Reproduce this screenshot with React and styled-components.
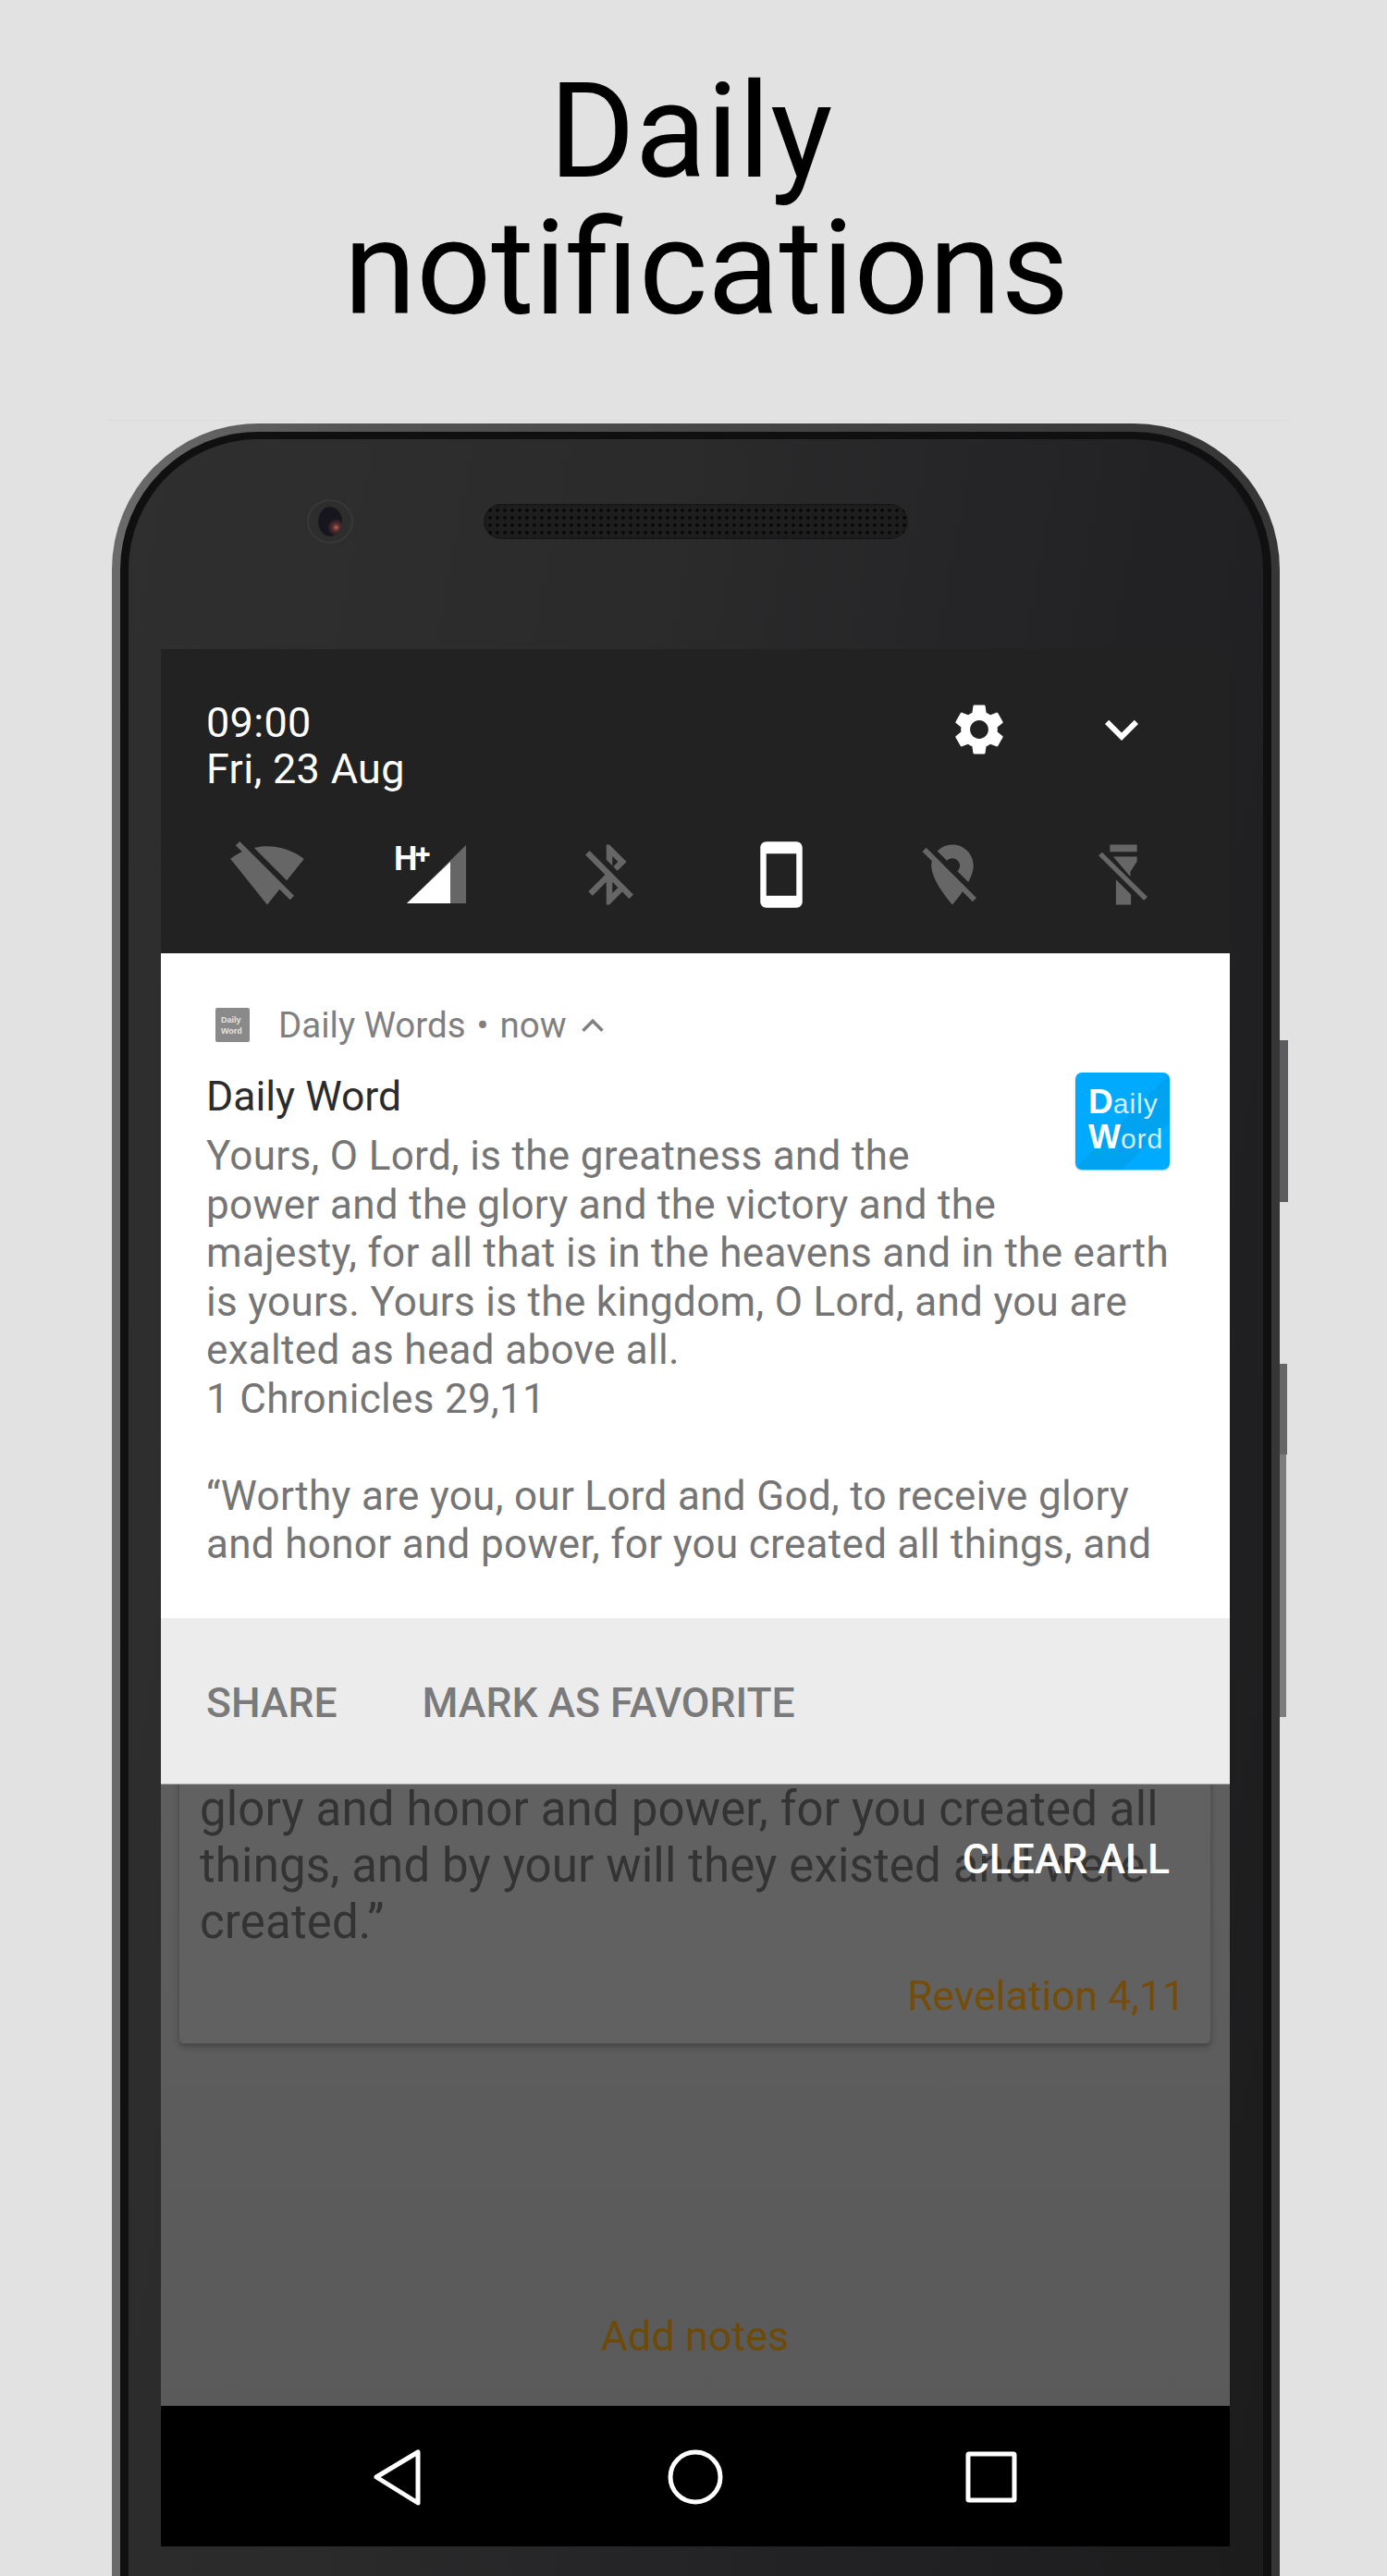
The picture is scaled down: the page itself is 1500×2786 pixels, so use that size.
import React from 'react';
import styled, { createGlobalStyle } from 'styled-components';

const GlobalStyle = createGlobalStyle`
  html, body {
    margin: 0;
    padding: 0;
    background: #e2e2e2;
  }
`;

const Page = styled.div`
  width: 1500px;
  height: 2786px;
  overflow: hidden;
  background: #e2e2e2;
  font-family: Roboto, "Liberation Sans", sans-serif;
`;

const Title = styled.h1`
  margin: 69px 0 89px;
  font-size: 142px;
  line-height: 148px;
  font-weight: 400;
  text-align: center;
  color: #000;
`;

const TitleLine = styled.div`
  padding-left: ${props => props.$left || 0}px;
  padding-right: ${props => props.$right || 0}px;
`;

const Rule = styled.div`
  width: 1280px;
  height: 1px;
  margin: 0 0 3px 115px;
  background: #dcdcdc;
`;

const Phone = styled.div`
  position: relative;
  width: 1263px;
  margin-left: 121px;
  padding: 9px 9px 0;
  box-sizing: border-box;
  border-radius: 158px 158px 0 0;
  background: linear-gradient(90deg, #6b6b6b 0, #555 20%, #464646 50%, #3a3a3a 85%, #363636 100%);
`;

const SideButton = styled.div`
  position: absolute;
  left: 100%;
  top: ${props => props.$top}px;
  width: ${props => props.$width}px;
  height: ${props => props.$height}px;
  background: ${props => props.$color};
`;

const Body = styled.div`
  padding: 227px 36px 60px 35px;
  border: solid #101010;
  border-width: 8px 9px 0;
  border-radius: 149px 149px 0 0;
  background: linear-gradient(100deg, #2f2f30 0, #2b2b2c 35%, #222224 70%, #1c1c1d 100%);
  position: relative;
`;

const Bezel = styled.div`
  position: absolute;
  top: 65px;
  left: 193px;
  display: flex;
  align-items: center;
  gap: 141px;
`;

const Camera = styled.div`
  width: 50px;
  height: 48px;
  border-radius: 50%;
  border: 2px solid #383839;
  box-sizing: border-box;
  display: flex;
  align-items: center;
  justify-content: center;
`;

const Lens = styled.div`
  width: 26px;
  height: 32px;
  border-radius: 50%;
  background: radial-gradient(circle at 75% 70%, #c8604f 0, #5a3034 12%, #17161f 32%);
`;

const Speaker = styled.div`
  width: 459px;
  height: 38px;
  border-radius: 19px;
  background-color: #1e1e1f;
  background-image: radial-gradient(circle, #0a0a0a 1.6px, transparent 2px);
  background-size: 8px 8px;
  background-position: 3px 3px;
  box-shadow: inset 0 0 3px #111;
`;

const Screen = styled.div`
  display: flex;
  flex-direction: column;
`;

const Stage = styled.div`
  display: grid;
  height: 1900px;
  overflow: hidden;
  background: linear-gradient(180deg, #626262 0, #5e5e5e 70%, #5a5a5a 100%);

  & > * {
    grid-area: 1 / 1;
  }
`;

const AppContent = styled.div`
  padding: 0 21px 0 20px;
`;

const Card = styled.div`
  height: 1508px;
  box-sizing: border-box;
  padding: 0 27px 25px 22px;
  display: flex;
  flex-direction: column;
  justify-content: flex-end;
  border-radius: 0 0 5px 5px;
  background: #616161;
  box-shadow: 0 3px 6px rgba(0, 0, 0, 0.3);
`;

const Verse = styled.div`
  font-size: 51px;
  line-height: 61px;
  letter-spacing: 0.15px;
  color: #333;
  white-space: nowrap;
`;

const Reference = styled.div`
  margin-top: 24px;
  font-size: 44.5px;
  line-height: 52px;
  text-align: right;
  color: #744d0a;
`;

const AddNotes = styled.div`
  margin-top: 291px;
  font-size: 45px;
  line-height: 52px;
  text-align: center;
  color: #6e4a08;
`;

const Shade = styled.div`
  align-self: start;
  display: flex;
  flex-direction: column;
`;

const Header = styled.div`
  height: 329px;
  box-sizing: border-box;
  padding-top: 51px;
  background: #222;
`;

const TopRow = styled.div`
  display: flex;
  align-items: flex-start;
  padding: 0 81px 0 49px;
`;

const Clock = styled.div`
  padding-top: 4px;
  font-size: 45px;
  line-height: 50px;
  letter-spacing: 0.3px;
  color: #fff;
`;

const Controls = styled.div`
  margin-left: auto;
  display: flex;
  align-items: center;
  gap: 85px;
`;

const Toggles = styled.div`
  display: grid;
  grid-template-columns: repeat(6, 1fr);
  align-items: center;
  justify-items: center;
  height: 80px;
  margin-top: 48px;
  padding: 0 22px;
`;

const SignalSvg = styled.svg`
  margin-right: 18px;
`;

const Notification = styled.div`
  height: 719px;
  box-sizing: border-box;
  padding-top: 59px;
  overflow: hidden;
  background: #fff;
`;

const AppRow = styled.div`
  display: flex;
  align-items: center;
  height: 37px;
  padding-left: 59px;
  font-size: 38.5px;
  color: #808080;
`;

const SmallBadge = styled.div`
  width: 37px;
  height: 37px;
  margin-right: 31px;
  padding: 7px 0 0 6px;
  box-sizing: border-box;
  border-radius: 2px;
  background: #8a8a8a;
  font-family: "Liberation Sans", sans-serif;
  font-size: 9px;
  line-height: 12px;
  font-weight: 700;
  color: #e4e4e4;
`;

const Dot = styled.span`
  margin: 0 12px;
`;

const AppChevron = styled.svg`
  margin-left: 14px;
`;

const Content = styled.div`
  display: grid;
  margin-top: 33px;

  & > * {
    grid-area: 1 / 1;
  }
`;

const TextBlock = styled.div`
  padding-left: 49px;
`;

const NotifTitle = styled.div`
  margin-bottom: 12px;
  font-size: 44.5px;
  line-height: 52px;
  color: #2b2b2b;
`;

const NotifLine = styled.div`
  min-height: 52.5px;
  font-size: 44px;
  line-height: 52.5px;
  letter-spacing: 0.32px;
  color: #757575;
  white-space: nowrap;
`;

const LargeIcon = styled.div`
  justify-self: end;
  align-self: start;
  width: 102px;
  height: 105px;
  margin: 0 65px 0 0;
  padding: 14px 0 0 14px;
  box-sizing: border-box;
  border-radius: 7px;
  background: linear-gradient(135deg, #00aaff 0, #00aaff 50%, #01a2f0 50%, #01a2f0 75%, #00aaff 75%);
  box-shadow: 0 1px 2px rgba(0, 0, 0, 0.25);
  font-family: "Liberation Sans", sans-serif;
  font-size: 30px;
  letter-spacing: 1px;
  line-height: 36px;
  color: #d4efff;
`;

const IconCap = styled.span`
  font-size: 37px;
  font-weight: 700;
  letter-spacing: 0;
  color: #fff;
`;

const ActionBar = styled.div`
  height: 179px;
  box-sizing: border-box;
  padding: 4px 0 0 49px;
  display: flex;
  align-items: center;
  gap: 92px;
  background: #ececec;
  box-shadow: 0 1px 0 #aaa;
  font-size: 44.5px;
  font-weight: 500;
  color: #7a7a7a;
`;

const ClearAll = styled.div`
  margin-top: 57px;
  padding-right: 65px;
  font-size: 44.5px;
  line-height: 50px;
  font-weight: 500;
  text-align: right;
  color: #fff;
`;

const NavBar = styled.div`
  height: 152px;
  display: flex;
  align-items: center;
  justify-content: center;
  gap: 258px;
  background: #000;
`;

const GRAY = '#666';

const Icon = ({ d, size = 78, color = GRAY }) => (
  <svg width={size} height={size} viewBox="0 0 24 24" fill={color}>
    <path d={d} />
  </svg>
);

const SignalIcon = () => (
  <SignalSvg width="80" height="80" viewBox="0 -8 80 80">
    <polygon points="79,0 79,63 15,63" fill={GRAY} />
    <polygon points="62,18 62,63 15,63" fill="#fff" />
    <text x="1" y="27" fontFamily="Roboto, sans-serif" fontSize="36" fontWeight="700" fill="#fff">H</text>
    <text x="24" y="20" fontFamily="Roboto, sans-serif" fontSize="30" fontWeight="700" fill="#fff">+</text>
  </SignalSvg>
);

const verseLines = [
  'Yours, O Lord, is the greatness and the',
  'power and the glory and the victory and the',
  'majesty, for all that is in the heavens and in the earth',
  'is yours. Yours is the kingdom, O Lord, and you are',
  'exalted as head above all.',
  '1 Chronicles 29,11',
  '',
  '“Worthy are you, our Lord and God, to receive glory',
  'and honor and power, for you created all things, and',
];

const cardLines = [
  'glory and honor and power, for you created all',
  'things, and by your will they existed and were',
  'created.”',
];

function App() {
  return (
    <Page>
      <GlobalStyle />
      <Title>
        <TitleLine $right={6}>Daily</TitleLine>
        <TitleLine $left={28}>notifications</TitleLine>
      </Title>
      <Rule />
      <Phone>
        <SideButton $top={667} $width={9} $height={175} $color="#5c5b5e" />
        <SideButton $top={1017} $width={8} $height={98} $color="#666" />
        <SideButton $top={1115} $width={7} $height={284} $color="#7d7d7d" />
        <Body>
          <Bezel>
            <Camera><Lens /></Camera>
            <Speaker />
          </Bezel>
          <Screen>
            <Stage>
              <AppContent>
                <Card>
                  {cardLines.map(line => <Verse key={line}>{line}</Verse>)}
                  <Reference>Revelation 4,11</Reference>
                </Card>
                <AddNotes>Add notes</AddNotes>
              </AppContent>
              <Shade>
                <Header>
                  <TopRow>
                    <Clock>09:00<br />Fri, 23 Aug</Clock>
                    <Controls>
                      <Icon size={66} color="#fff" d="M19.14 12.94c.04-.3.06-.61.06-.94 0-.32-.02-.64-.07-.94l2.03-1.58c.18-.14.23-.41.12-.61l-1.92-3.32c-.12-.22-.37-.29-.59-.22l-2.39.96c-.5-.38-1.03-.7-1.62-.94l-.36-2.54c-.04-.24-.24-.41-.48-.41h-3.84c-.24 0-.43.17-.47.41l-.36 2.54c-.59.24-1.13.57-1.62.94l-2.39-.96c-.22-.08-.47 0-.59.22L2.74 8.87c-.12.21-.08.47.12.61l2.03 1.58c-.05.3-.09.63-.09.94s.02.64.07.94l-2.03 1.58c-.18.14-.23.41-.12.61l1.92 3.32c.12.22.37.29.59.22l2.39-.96c.5.38 1.03.7 1.62.94l.36 2.54c.05.24.24.41.48.41h3.84c.24 0 .44-.17.47-.41l.36-2.54c.59-.24 1.13-.56 1.62-.94l2.39.96c.22.08.47 0 .59-.22l1.92-3.32c.12-.22.07-.47-.12-.61l-2.01-1.58zM12 15.6c-1.98 0-3.6-1.62-3.6-3.6s1.62-3.6 3.6-3.6 3.6 1.62 3.6 3.6-1.62 3.6-3.6 3.6z" />
                      <Icon size={72} color="#fff" d="M16.59 8.59L12 13.17 7.41 8.59 6 10l6 6 6-6z" />
                    </Controls>
                  </TopRow>
                  <Toggles>
                    <Icon size={82} d="M23.64 7c-.45-.34-4.93-4-11.64-4-1.5 0-2.89.19-4.15.48L18.18 13.8 23.64 7zm-6.6 8.22L3.27 1.44 2 2.72l2.05 2.06C1.91 5.76.59 6.82.36 7l11.63 14.49.01.01.01-.01 3.9-4.86 3.32 3.32 1.27-1.27-3.46-3.46z" />
                    <SignalIcon />
                    <Icon d="M13 5.83l1.88 1.88-1.6 1.6 1.41 1.41 3.02-3.02L12 2h-1v5.03l2 2v-3.2zM5.41 4L4 5.41 10.59 12 5 17.59 6.41 19 11 14.41V22h1l4.29-4.29 2.3 2.3L20 18.59 5.41 4zM13 18.17v-3.76l1.88 1.88L13 18.17z" />
                    <Icon color="#fff" d="M17 1.01L7 1c-1.1 0-1.99.9-1.99 2v18c0 1.1.89 2 1.99 2h10c1.1 0 2-.9 2-2V3c0-1.1-.9-1.99-2-1.99zM17 19H7V5h10v14z" />
                    <Icon d="M12 6.5c1.38 0 2.5 1.12 2.5 2.5 0 .74-.33 1.39-.83 1.85l3.63 3.63c.98-1.86 1.7-3.8 1.7-5.48 0-3.87-3.13-7-7-7-1.98 0-3.76.83-5.04 2.15l3.19 3.19c.46-.52 1.11-.84 1.85-.84zm4.37 9.6l-4.63-4.63-.11-.11L3.27 3 2 4.27l3.18 3.18C5.07 7.95 5 8.47 5 9c0 5.25 7 13 7 13s1.67-1.85 3.38-4.35L18.73 21 20 19.73l-3.63-3.63z" />
                    <Icon d="M7.5 2h9v2.4h-9zM8.6 6h7.9v1.6l-2.2 3.4v1.7zM9.5 13.6l5 5V22h-5zM3.7 5.6l1.2-1.1L20 19.4l-1.2 1.1z" />
                  </Toggles>
                </Header>
                <Notification>
                  <AppRow>
                    <SmallBadge>Daily<br />Word</SmallBadge>
                    Daily Words<Dot>•</Dot>now
                    <AppChevron width="28" height="28" viewBox="0 0 24 24" fill="none" stroke="#808080" strokeWidth="3">
                      <path d="M3 17l9-9 9 9" />
                    </AppChevron>
                  </AppRow>
                  <Content>
                    <TextBlock>
                      <NotifTitle>Daily Word</NotifTitle>
                      {verseLines.map((line, i) => <NotifLine key={i}>{line}</NotifLine>)}
                    </TextBlock>
                    <LargeIcon>
                      <IconCap>D</IconCap>aily<br />
                      <IconCap>W</IconCap>ord
                    </LargeIcon>
                  </Content>
                </Notification>
                <ActionBar>
                  <span>SHARE</span>
                  <span>MARK AS FAVORITE</span>
                </ActionBar>
                <ClearAll>CLEAR ALL</ClearAll>
              </Shade>
            </Stage>
            <NavBar>
              <svg width="64" height="64" viewBox="0 0 64 64" fill="none" stroke="#fff" strokeWidth="5" strokeLinejoin="round">
                <path d="M54 6v55L9 33z" />
              </svg>
              <svg width="64" height="64" viewBox="0 0 64 64" fill="none" stroke="#fff" strokeWidth="5">
                <circle cx="32" cy="33" r="27" />
              </svg>
              <svg width="64" height="64" viewBox="0 0 64 64" fill="none" stroke="#fff" strokeWidth="5">
                <rect x="5" y="8" width="50" height="50" rx="1" />
              </svg>
            </NavBar>
          </Screen>
        </Body>
      </Phone>
    </Page>
  );
}

export default App;
